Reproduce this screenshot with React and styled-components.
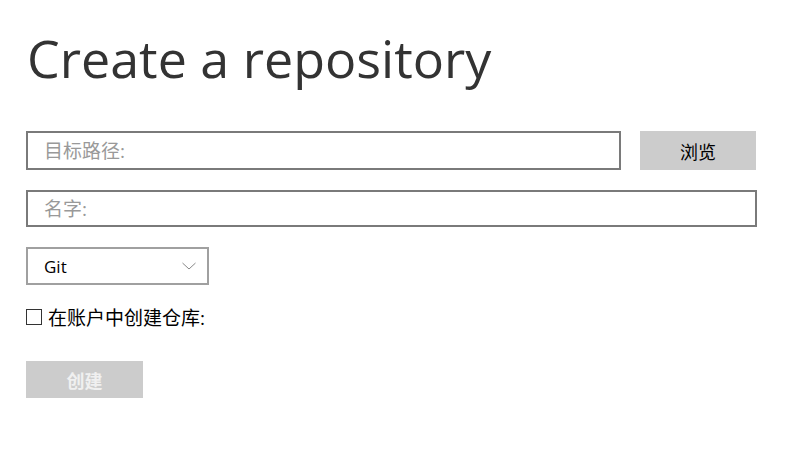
import React from 'react';
import styled, { createGlobalStyle } from 'styled-components';

const GlobalStyle = createGlobalStyle`
  body {
    margin: 0;
    background: #ffffff;
    font-family: "Open Sans", "Noto Sans CJK SC", sans-serif;
  }
`;

const Page = styled.div`
  width: 731px;
  padding: 18px 0 0 26px;
`;

const Title = styled.h1`
  margin: 0 0 33px 1px;
  font-size: 52px;
  font-weight: 400;
  line-height: 80px;
  color: #333333;
`;

const Row = styled.div`
  display: flex;
  align-items: center;
  gap: 19px;
  margin-bottom: ${(p) => p.$gap || 20}px;
`;

const TextInput = styled.input`
  flex: 1;
  height: ${(p) => p.$height || 39}px;
  box-sizing: border-box;
  border: 2px solid #7a7a7a;
  padding: 0 16px;
  font-size: 19px;
  font-family: "Open Sans", "Noto Sans CJK SC", sans-serif;
  color: #333;
  outline: none;
  &::placeholder {
    color: #999999;
  }
`;

const GrayButton = styled.button`
  width: ${(p) => p.$width}px;
  height: ${(p) => p.$height || 39}px;
  margin-right: ${(p) => p.$inset || 0}px;
  border: none;
  background: #cccccc;
  font-family: "Open Sans", "Noto Sans CJK SC", sans-serif;
  font-size: 18px;
  font-weight: ${(p) => (p.$bold ? 700 : 400)};
  color: ${(p) => (p.$disabled ? '#f0f0f0' : '#000000')};
  cursor: pointer;
  padding: 0;
`;

const Select = styled.div`
  width: 183px;
  height: 38px;
  box-sizing: border-box;
  border: 2px solid #a0a0a0;
  display: flex;
  align-items: center;
  justify-content: space-between;
  padding: 0 11px 0 16px;
  font-size: 17px;
  color: #000;
`;

const CheckLabel = styled.label`
  display: flex;
  align-items: center;
  height: 26px;
  gap: 6px;
  font-size: 19px;
  color: #000;
  margin-bottom: 31px;
`;

const Box = styled.span`
  width: 16px;
  height: 16px;
  box-sizing: border-box;
  border: 1px solid #333;
`;

const App = () => {
  return (
    <Page>
      <GlobalStyle />
      <Title>Create a repository</Title>
      <Row>
        <TextInput placeholder="目标路径:" />
        <GrayButton $width={116} $inset={1}>浏览</GrayButton>
      </Row>
      <Row>
        <TextInput placeholder="名字:" $height={37} />
      </Row>
      <Row $gap={19}>
        <Select>
          <span>Git</span>
          <svg width="14" height="8" viewBox="0 0 14 8">
            <path d="M0.5 1l6.5 6 6.5-6" fill="none" stroke="#888" strokeWidth="1" />
          </svg>
        </Select>
      </Row>
      <CheckLabel>
        <Box />
        在账户中创建仓库:
      </CheckLabel>
      <GrayButton $width={117} $height={37} $bold $disabled>
        创建
      </GrayButton>
    </Page>
  );
};

export default App;
